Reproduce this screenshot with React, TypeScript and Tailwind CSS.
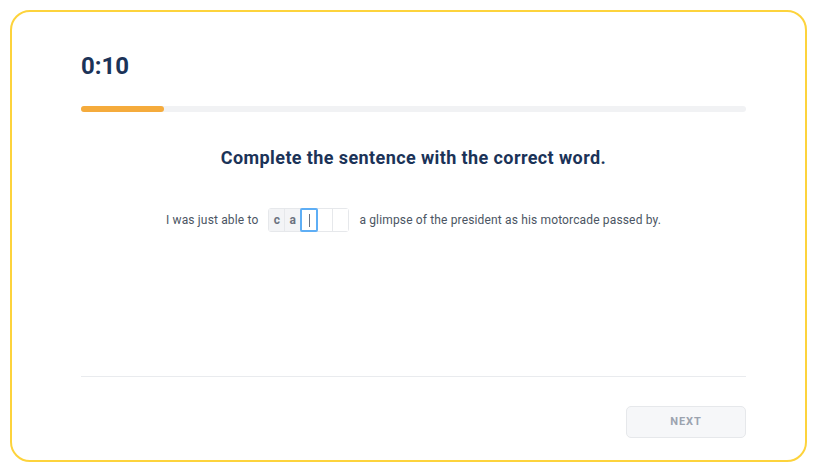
const LetterBox = ({ letter, active }: { letter?: string; active?: boolean }) => {
  if (active) {
    return (
      <div className="w-[18px] h-[24px] -my-px border-2 border-[#5eaef5] rounded-[2px] flex items-center justify-center bg-white">
        <span className="w-px h-[13px] bg-gray-500" />
      </div>
    );
  }
  return (
    <div
      className={`w-[15px] h-[22px] flex items-center justify-center text-[12px] font-bold text-[#6b7280] border-r border-[#e6e8eb] last:border-r-0 ${
        letter ? "bg-[#f3f4f6]" : "bg-white"
      }`}
    >
      {letter}
    </div>
  );
};

const App = () => {
  return (
    <div className="w-[830px] h-[469px] bg-white pt-[10px] pl-[10px] font-['Roboto',sans-serif]">
      <div className="w-[797px] h-[452px] border-2 border-[#fdd33c] rounded-[20px] pl-[69px] pr-[59px] flex flex-col">
        <div className="mt-[38px] text-[24px] leading-[32px] font-bold text-[#1b3358]">0:10</div>

        <div className="mt-[24px] h-[6px] w-full rounded-full bg-[#f1f2f4]">
          <div className="h-full w-[83px] rounded-full bg-[#f5ab3c]" />
        </div>

        <h1 className="mt-[32px] text-center text-[18px] leading-[28px] font-bold tracking-[0.4px] text-[#1b3358]">
          Complete the sentence with the correct word.
        </h1>

        <div className="mt-[36px] flex items-center justify-center text-[12px] tracking-[0.15px] text-[#4b5563]">
          <span>I was just able to</span>
          <div className="mx-[10px] flex items-center border border-[#e6e8eb] rounded-[3px]">
            <div className="w-4 h-[22px] flex items-center justify-center text-[12px] font-bold text-[#6b7280] bg-[#f3f4f6] border-r border-[#e6e8eb]">
              c
            </div>
            <div className="w-[15px] h-[22px] flex items-center justify-center text-[12px] font-bold text-[#6b7280] bg-[#f3f4f6]">
              a
            </div>
            <LetterBox active />
            <LetterBox />
            <LetterBox />
          </div>
          <span>a glimpse of the president as his motorcade passed by.</span>
        </div>

        <div className="mt-[144px] h-px w-full bg-[#e9ebee]" />

        <div className="mt-[29px] flex justify-end">
          <button className="w-[120px] h-[32px] rounded-[5px] border border-[#e6e8eb] bg-[#f6f7f9] text-[11px] font-bold tracking-[0.08em] text-[#9ca3af]">
            NEXT
          </button>
        </div>
      </div>
    </div>
  );
};

export default App;
